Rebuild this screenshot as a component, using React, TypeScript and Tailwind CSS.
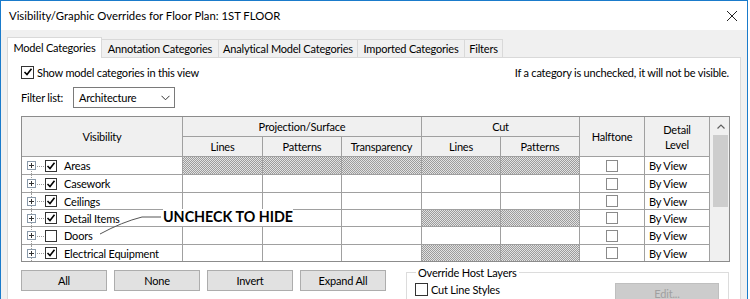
import React from "react";

type Row = { name: string; checked: boolean; hatch: number[] };

const rows: Row[] = [
  { name: "Areas", checked: true, hatch: [1, 2, 3, 4, 5] },
  { name: "Casework", checked: true, hatch: [] },
  { name: "Ceilings", checked: true, hatch: [] },
  { name: "Detail Items", checked: true, hatch: [4, 5] },
  { name: "Doors", checked: false, hatch: [] },
  { name: "Electrical Equipment", checked: true, hatch: [4, 5] },
];

const W = ["w-[161px]", "w-[80px]", "w-[79px]", "w-[80px]", "w-[79px]", "w-[79px]", "w-[65px]", "w-[65px]"];
const H = ["h-[18px]", "h-[18px]", "h-[17px]", "h-[17px]", "h-[18px]", "h-[16px]"];

const HATCH =
  "bg-[image:repeating-conic-gradient(#9c9c9c_0%_25%,#e2e2e2_0%_50%)] bg-[length:2px_2px]";

function Check({ checked, className }: { checked: boolean; className: string }) {
  return (
    <div className={"relative shrink-0 bg-white border flex items-center justify-center " + className}>
      {checked && (
        <svg width="10" height="10" viewBox="0 0 10 10" className="block">
          <polyline points="1.5,5 4,7.5 8.5,1.8" fill="none" stroke="#000" strokeWidth="1.6" />
        </svg>
      )}
    </div>
  );
}

function Btn({ label }: { label: string }) {
  return (
    <div className="w-[86px] h-[21px] bg-[#e1e1e1] border border-[#adadad] flex items-center justify-center text-black">
      {label}
    </div>
  );
}

export default function App() {
  return (
    <div className="relative w-[750px] h-[299px] overflow-hidden bg-white font-['Lato','Noto_Sans',sans-serif] text-[11px] tracking-[-0.2px] text-black leading-none">
      <div className="w-[748px] border border-[#1a7bcb] bg-[#f0f0f0] flex flex-col">
        {/* title bar */}
        <div className="shrink-0 h-[29px] bg-white flex items-center justify-between pl-[8px] pr-[8px]">
          <span className="text-[11.3px] tracking-normal">Visibility/Graphic Overrides for Floor Plan: 1ST FLOOR</span>
          <svg width="12" height="12" viewBox="0 0 12 12" className="mr-[1px] mt-[1px]">
            <path d="M1 1 L11 11 M11 1 L1 11" stroke="#222" strokeWidth="1" />
          </svg>
        </div>

        {/* body */}
        <div className="shrink-0 flex flex-col pl-[6px] pr-[6px] pt-[7px] pb-[10px]">
          {/* tabs */}
          <div className="shrink-0 flex items-end h-[20px]">
            <div className="relative z-10 -mb-px h-[21px] w-[95px] bg-white border border-b-0 border-[#d9d9d9] flex items-center justify-center pb-[1px]">
              Model Categories
            </div>
            <div className="h-[18px] w-[117px] border border-l-0 border-b-0 border-[#d9d9d9] flex items-center justify-center">
              Annotation Categories
            </div>
            <div className="h-[18px] w-[139px] border border-l-0 border-b-0 border-[#d9d9d9] flex items-center justify-center">
              Analytical Model Categories
            </div>
            <div className="h-[18px] w-[107px] border border-l-0 border-b-0 border-[#d9d9d9] flex items-center justify-center">
              Imported Categories
            </div>
            <div className="h-[18px] w-[38px] border border-l-0 border-b-0 border-[#d9d9d9] flex items-center justify-center">
              Filters
            </div>
          </div>

          {/* panel */}
          <div className="shrink-0 bg-white border border-[#d9d9d9] flex flex-col pl-[13px] pr-[11px] pb-[20px]">
            <div className="shrink-0 mt-[7px] h-[14px] flex items-center justify-between">
              <div className="flex items-center">
                <Check checked className="w-[13px] h-[13px] border-[#333]" />
                <span className="ml-[3px]">Show model categories in this view</span>
              </div>
              <span>If a category is unchecked, it will not be visible.</span>
            </div>

            <div className="shrink-0 mt-[8px] h-[21px] flex items-center">
              <span className="w-[52px]">Filter list:</span>
              <div className="w-[102px] h-[21px] border border-[#7a7a7a] bg-white flex items-center justify-between pl-[5px] pr-[4px]">
                <span>Architecture</span>
                <svg width="9" height="6" viewBox="0 0 9 6">
                  <polyline points="0.5,0.8 4.5,4.8 8.5,0.8" fill="none" stroke="#333" strokeWidth="1" />
                </svg>
              </div>
            </div>

            {/* table */}
            <div className="shrink-0 mt-[8px] w-[709px] h-[146px] border border-[#8c8c8c] flex">
              <div className="w-[688px] flex flex-col">
                <div className="shrink-0 grid grid-cols-[161px_80px_79px_80px_79px_79px_65px_65px] grid-rows-[20px_20px] bg-[#f0f0f0]">
                  <div className="row-span-2 border-r border-b border-[#a0a0a0] flex items-center justify-center">Visibility</div>
                  <div className="col-span-3 border-r border-b border-[#a0a0a0] flex items-center justify-center">Projection/Surface</div>
                  <div className="col-span-2 border-r border-b border-[#a0a0a0] flex items-center justify-center">Cut</div>
                  <div className="row-span-2 border-r border-b border-[#a0a0a0] flex items-center justify-center">Halftone</div>
                  <div className="row-span-2 border-r border-b border-[#a0a0a0] flex flex-col items-center justify-center leading-[15px]">
                    <span>Detail</span>
                    <span>Level</span>
                  </div>
                  <div className="border-r border-b border-[#a0a0a0] flex items-center justify-center">Lines</div>
                  <div className="border-r border-b border-[#a0a0a0] flex items-center justify-center">Patterns</div>
                  <div className="border-r border-b border-[#a0a0a0] flex items-center justify-center">Transparency</div>
                  <div className="border-r border-b border-[#a0a0a0] flex items-center justify-center">Lines</div>
                  <div className="border-r border-b border-[#a0a0a0] flex items-center justify-center">Patterns</div>
                </div>
                {rows.map((r, ri) => (
                  <div key={r.name} className={"shrink-0 flex " + H[ri]}>
                    <div className={W[0] + " relative h-full border-r border-[#a0a0a0] flex items-center " + (ri < 5 ? "border-b" : "")}>
                      <div className={"absolute left-[9px] w-0 border-l border-dotted border-[#9a9a9a] " + (ri === 0 ? "top-[8px] bottom-0" : "top-0 bottom-0")} />
                      <div className="absolute left-[13px] w-[9px] top-1/2 border-t border-dotted border-[#9a9a9a]" />
                      <div className="relative shrink-0 ml-[5px] w-[9px] h-[9px] border border-[#8a9aaa] bg-white flex items-center justify-center">
                        <svg width="7" height="7" viewBox="0 0 7 7" className="block">
                          <path d="M1 3.5 H6 M3.5 1 V6" stroke="#333" strokeWidth="1" />
                        </svg>
                      </div>
                      <Check checked={r.checked} className="ml-[9px] w-[12px] h-[12px] border-[#333]" />
                      <span className="ml-[7px]">{r.name}</span>
                    </div>
                    {[1, 2, 3, 4, 5].map((c) => (
                      <div
                        key={c}
                        className={W[c] + " h-full border-r border-[#a0a0a0] " + (ri < 5 ? "border-b " : "") + (r.hatch.includes(c) ? HATCH : "")}
                      />
                    ))}
                    <div className={W[6] + " h-full border-r border-[#a0a0a0] flex items-center justify-center " + (ri < 5 ? "border-b" : "")}>
                      <div className="w-[12px] h-[12px] border border-[#8a8a8a] bg-white" />
                    </div>
                    <div className={W[7] + " h-full border-r border-[#a0a0a0] flex items-center pl-[4px] " + (ri < 5 ? "border-b" : "")}>
                      By View
                    </div>
                  </div>
                ))}
              </div>
              {/* scrollbar */}
              <div className="w-[19px] bg-[#f0f0f0] flex flex-col pl-[3px]">
                <div className="shrink-0 h-[18px] flex items-center justify-center">
                  <svg width="8" height="5" viewBox="0 0 8 5">
                    <polyline points="0.5,4.5 4,1 7.5,4.5" fill="none" stroke="#606060" strokeWidth="1.2" />
                  </svg>
                </div>
                <div className="shrink-0 h-[72px] w-[15px] bg-[#cdcdcd]" />
              </div>
            </div>

            {/* bottom */}
            <div className="shrink-0 mt-[8px] flex items-start">
              <div className="flex gap-[7px]">
                <Btn label="All" />
                <Btn label="None" />
                <Btn label="Invert" />
                <Btn label="Expand All" />
              </div>
              <fieldset className="ml-[20px] -mt-[5px] w-[323px] h-[60px] border border-[#dcdcdc] pl-[8px] pr-[9px]">
                <legend className="ml-[1px] px-[2px] leading-[15px]">Override Host Layers</legend>
                <div className="mt-[3px] flex items-start justify-between">
                  <div className="flex items-center">
                    <Check checked={false} className="w-[13px] h-[13px] border-[#333]" />
                    <span className="ml-[3px]">Cut Line Styles</span>
                  </div>
                  <div className="w-[104px] h-[20px] bg-[#cccccc] border border-[#bfbfbf] text-[#a0a0a0] flex items-center justify-center">
                    Edit...
                  </div>
                </div>
              </fieldset>
            </div>
          </div>
        </div>
      </div>

      {/* annotation */}
      <svg className="absolute left-0 top-0" width="750" height="299">
        <path d="M100 234 Q122 222 142 217 L161 217" fill="none" stroke="#555" strokeWidth="1" />
      </svg>
      <div className="absolute left-[163px] top-[209px] h-[17px] bg-white px-0 flex items-center font-bold text-[14.3px] tracking-normal">
        UNCHECK TO HIDE
      </div>
    </div>
  );
}
